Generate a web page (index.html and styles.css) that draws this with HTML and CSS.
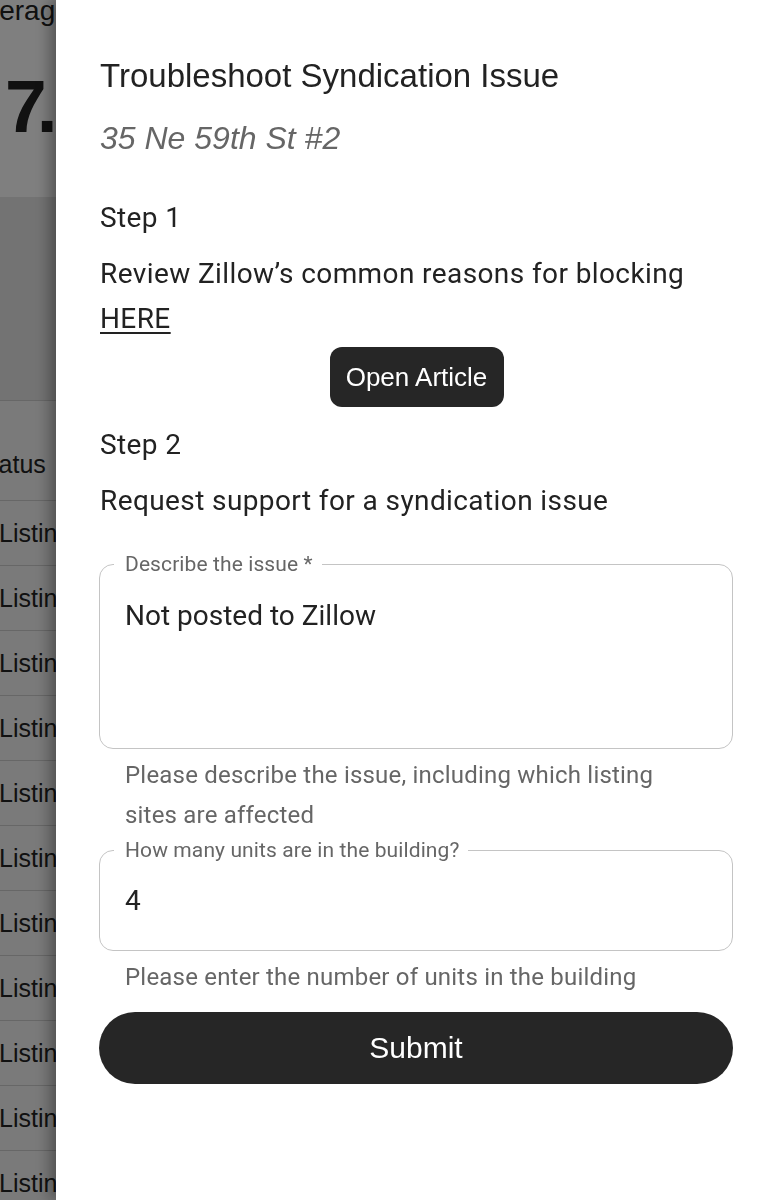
FILE: index.html
```html
<!DOCTYPE html>
<html lang="en">
<head>
    <meta charset="UTF-8">
    <meta name="viewport" content="width=device-width, initial-scale=1.0">
    <title>Troubleshoot Syndication Issue</title>
    <link rel="stylesheet" href="styles.css">
</head>
<body>
    <!-- page behind the drawer -->
    <div class="page">
        <div class="stat">
            <p class="stat-label">Average Days</p>
            <p class="stat-value">7.<span class="decimal">4</span></p>
        </div>
        <div class="band"></div>
        <div class="table">
            <div class="row head"><span class="cell-head">Status</span></div>
            <div class="row"><span class="cell">Listing Active</span></div>
            <div class="row"><span class="cell">Listing Active</span></div>
            <div class="row"><span class="cell">Listing Active</span></div>
            <div class="row"><span class="cell">Listing Active</span></div>
            <div class="row"><span class="cell">Listing Active</span></div>
            <div class="row"><span class="cell">Listing Active</span></div>
            <div class="row"><span class="cell">Listing Active</span></div>
            <div class="row"><span class="cell">Listing Active</span></div>
            <div class="row"><span class="cell">Listing Active</span></div>
            <div class="row"><span class="cell">Listing Active</span></div>
            <div class="row"><span class="cell">Listing Active</span></div>
        </div>
    </div>

    <div class="backdrop"></div>

    <aside class="drawer">
        <h2 class="title">Troubleshoot Syndication Issue</h2>
        <p class="address">35 Ne 59th St #2</p>

        <h3 class="step">Step 1</h3>
        <p class="step-text">Review Zillow’s common reasons for blocking <a href="#" class="link">HERE</a></p>
        <div class="center">
            <button class="article-btn">Open Article</button>
        </div>

        <h3 class="step step-2">Step 2</h3>
        <p class="step-text">Request support for a syndication issue</p>

        <form class="form" onsubmit="return false">
            <fieldset class="field field-issue">
                <legend>Describe the issue *</legend>
                <textarea class="input" rows="3">Not posted to Zillow</textarea>
            </fieldset>
            <p class="helper">Please describe the issue, including which listing sites are affected</p>

            <fieldset class="field field-units">
                <legend>How many units are in the building?</legend>
                <input class="input" type="text" value="4">
            </fieldset>
            <p class="helper">Please enter the number of units in the building</p>

            <button class="submit-btn" type="submit">Submit</button>
        </form>
    </aside>
</body>
</html>
```

FILE: styles.css
```css
*{
    margin: 0;
    padding: 0;
    box-sizing: border-box;
}
body{
    width: 776px;
    height: 1200px;
    overflow: hidden;
    background: #fff;
    font-family: "Roboto", "Liberation Sans", sans-serif;
    color: #222;
}

/* page behind */
.page{
    font-family: "Liberation Sans", Arial, sans-serif;
    color: #222;
}
.stat{
    display: flow-root;
    height: 197px;
}
.stat-label{
    font-size: 28px;
    line-height: 22px;
    margin-left: -33px;
    white-space: nowrap;
}
.stat-value{
    font-size: 75px;
    font-weight: 700;
    letter-spacing: -10px;
    line-height: 80px;
    margin-left: 5px;
    margin-top: 44px;
    white-space: nowrap;
}
.stat-value .decimal{
    margin-left: 16px;
}
.band{
    height: 203px;
    background: #e6e6e6;
}
.table{
    background: #f5f5f5;
}
.table .row{
    height: 65px;
    display: flex;
    align-items: center;
    border-top: 1px solid #cfcfcf;
    font-size: 25px;
}
.table .row.head{
    height: 100px;
    align-items: flex-end;
    padding-bottom: 21px;
}
.cell-head{
    margin-left: -25px;
}
.cell{
    margin-left: -1px;
    white-space: nowrap;
}
.backdrop{
    position: fixed;
    inset: 0;
    background: rgba(0, 0, 0, 0.5);
}

/* drawer */
.drawer{
    position: fixed;
    top: 0;
    right: 0;
    bottom: 0;
    width: 720px;
    background: #fff;
    padding: 56px 43px 0 44px;
    box-shadow: -6px 0 14px rgba(0, 0, 0, 0.35);
}
.title{
    font-family: "Liberation Sans", Arial, sans-serif;
    font-weight: 400;
    font-size: 33px;
    line-height: 40px;
    color: #222;
}
.address{
    font-family: "Liberation Sans", Arial, sans-serif;
    font-style: italic;
    font-size: 32px;
    line-height: 40px;
    margin-top: 22px;
    color: #666;
}
.step{
    font-weight: 400;
    font-size: 28px;
    letter-spacing: 0.4px;
    line-height: 45px;
    margin-top: 37px;
}
.step-2{
    margin-top: 15px;
}
.step-text{
    font-size: 28px;
    letter-spacing: 0.4px;
    line-height: 45px;
    margin-top: 11px;
}
.link{
    color: #222;
    text-decoration: underline;
    text-underline-offset: 4px;
}
.center{
    display: flex;
    justify-content: center;
    margin-top: 6px;
}
.article-btn{
    width: 174px;
    height: 60px;
    border: none;
    border-radius: 12px;
    background: #262626;
    color: #fff;
    font-family: "Liberation Sans", Arial, sans-serif;
    font-size: 26px;
    cursor: pointer;
}
.form{
    margin-top: 29px;
    margin-left: -1px;
}
.field{
    border: 1px solid #c4c4c4;
    border-radius: 14px;
    padding: 0 12px 0 14px;
}
.field legend{
    font-size: 21px;
    letter-spacing: 0.1px;
    line-height: 24px;
    color: #666;
    padding: 0 9px 0 11px;
}
.input{
    display: block;
    width: 100%;
    border: none;
    outline: none;
    resize: none;
    background: transparent;
    font-family: "Roboto", "Liberation Sans", sans-serif;
    font-size: 28px;
    line-height: 36px;
    color: #222;
    padding: 0 11px;
}
.field-issue textarea{
    height: 172px;
    padding-top: 22px;
    padding-bottom: 0;
}
.field-units .input{
    height: 88px;
    padding-top: 20px;
    padding-bottom: 32px;
}
.helper{
    font-size: 24px;
    letter-spacing: 0.2px;
    line-height: 40px;
    color: #666;
    padding: 0 60px 0 26px;
    margin-top: 6px;
}
.field-units{
    margin-top: 3px;
}
.submit-btn{
    display: block;
    width: 100%;
    height: 72px;
    margin-top: 15px;
    border: none;
    border-radius: 36px;
    background: #262626;
    color: #fff;
    font-family: "Liberation Sans", Arial, sans-serif;
    font-size: 30px;
    cursor: pointer;
}
```
